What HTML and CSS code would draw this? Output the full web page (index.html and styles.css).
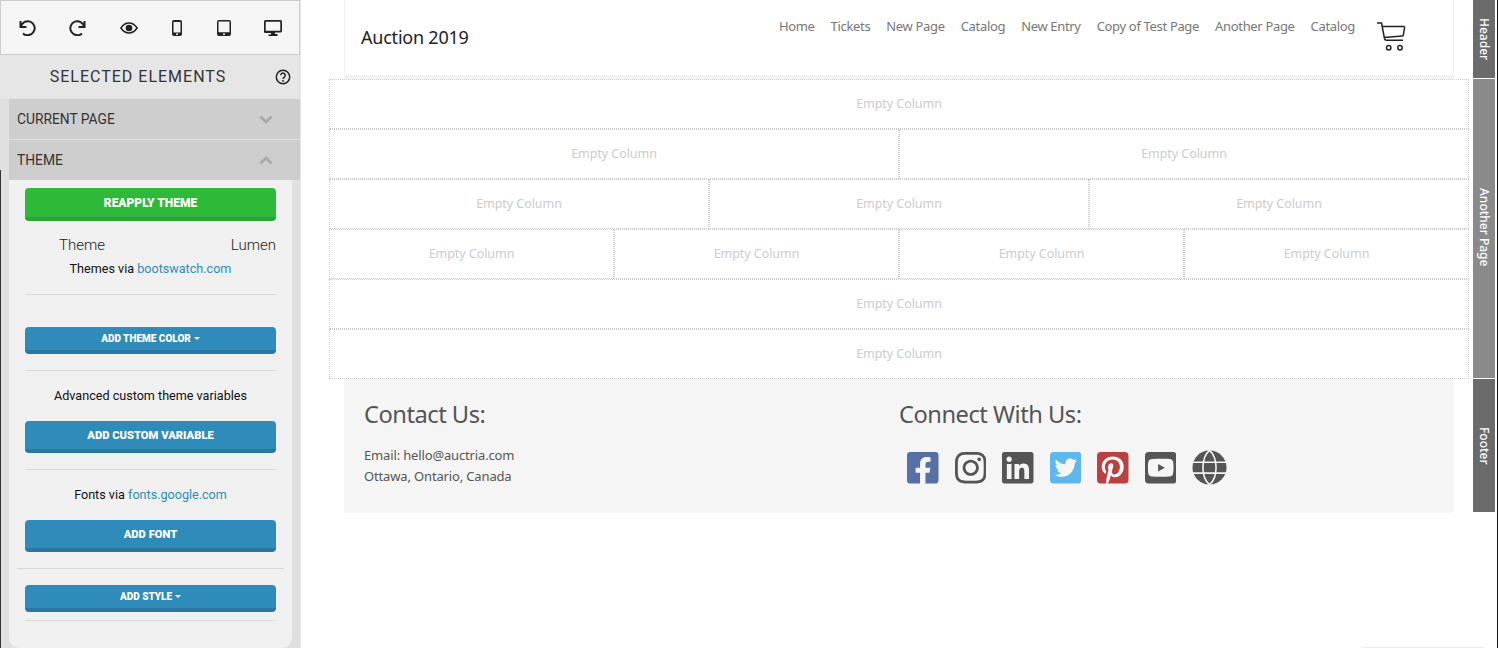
FILE: index.html
```html
<!DOCTYPE html>
<html lang="en">
<head>
<meta charset="utf-8">
<title>Auction 2019</title>
<link rel="stylesheet" href="styles.css">
</head>
<body>
<aside class="sidebar">
  <div class="toolbar">
    <svg class="tool t-undo" viewBox="0 0 17 16"><path class="ln" d="M1.500 1v6h6M1.800 6.800A7 7 0 1 1 4 13.400"/></svg>
    <svg class="tool t-redo" viewBox="0 0 17 16"><path class="ln" d="M15.500 1v6h-6M15.200 6.800A7 7 0 1 0 13 13.400"/></svg>
    <svg class="tool t-eye" viewBox="0 0 18 12"><path class="ln thin" d="M.9 6C3 2.800 5.800 1 9 1s6 1.800 8.100 5C15 9.200 12.200 11 9 11S3 9.200.9 6z"/><circle cx="9" cy="6" r="3.300"/></svg>
    <svg class="tool t-phone" viewBox="0 0 10 16"><path fill-rule="evenodd" d="M2 0h6a2 2 0 0 1 2 2v12a2 2 0 0 1-2 2H2a2 2 0 0 1-2-2V2a2 2 0 0 1 2-2zm-.5 2v10.500h7V2zM5 13.200a1 1 0 1 0 0 2 1 1 0 0 0 0-2z"/></svg>
    <svg class="tool t-tablet" viewBox="0 0 14 16"><path fill-rule="evenodd" d="M2 0h10a2 2 0 0 1 2 2v12a2 2 0 0 1-2 2H2a2 2 0 0 1-2-2V2a2 2 0 0 1 2-2zm-.5 1.500v10.800h11V1.500zM7 13.200a1 1 0 1 0 0 2 1 1 0 0 0 0-2z"/></svg>
    <svg class="tool t-desk" viewBox="0 0 18 16"><path fill-rule="evenodd" d="M1.500 0h15A1.500 1.500 0 0 1 18 1.500v9.500a1.500 1.500 0 0 1-1.500 1.500h-5.500v1.500h2.500V16h-9v-1.500H7v-1.500H1.500A1.500 1.500 0 0 1 0 11V1.500A1.500 1.500 0 0 1 1.500 0zm.2 1.700v9.100h14.600V1.700z"/></svg>
  </div>
  <div class="title">
    <span class="title-text">SELECTED ELEMENTS</span>
    <svg class="help" viewBox="0 0 16 16"><circle cx="8" cy="8" r="6.700"/><path d="M5.800 6.300a2.200 2.200 0 1 1 3.500 1.800c-.8.600-1.300 1-1.300 2"/><circle class="dot" cx="8" cy="12" r=".9"/></svg>
  </div>
  <div class="accordion">
    <div class="acc-head"><span>CURRENT PAGE</span><svg class="chev" viewBox="0 0 14 9"><path d="M1.500 1.500 7 7l5.500-5.500"/></svg></div>
    <div class="acc-head acc-second"><span>THEME</span><svg class="chev" viewBox="0 0 14 9"><path d="M1.500 7.500 7 2l5.500 5.500"/></svg></div>
    <div class="panel">
      <a class="btn btn-green">REAPPLY THEME</a>
      <div class="theme-row"><span class="theme-label">Theme</span><span>Lumen</span></div>
      <p class="note note-themes">Themes via <a class="link">bootswatch.com</a></p>
      <hr class="rule rule-a">
      <a class="btn btn-small btn-color">ADD THEME COLOR<i class="caret"></i></a>
      <hr class="rule rule-b">
      <p class="note note-adv">Advanced custom theme variables</p>
      <a class="btn btn-var">ADD CUSTOM VARIABLE</a>
      <hr class="rule rule-c">
      <p class="note note-fonts">Fonts via <a class="link">fonts.google.com</a></p>
      <a class="btn btn-font">ADD FONT</a>
      <hr class="rule rule-wide">
      <a class="btn btn-small btn-style">ADD STYLE<i class="caret"></i></a>
      <hr class="rule rule-d">
    </div>
  </div>
</aside>
<main class="main">
  <div class="content">
    <header class="site-header">
      <div class="brand">Auction 2019</div>
      <nav class="nav">
        <a>Home</a><a>Tickets</a><a>New Page</a><a>Catalog</a><a>New Entry</a><a>Copy of Test Page</a><a>Another Page</a><a>Catalog</a>
      </nav>
      <svg class="cart" viewBox="0 0 30 30"><path d="M1 2h4.500l3 15.500c.2 1 .8 1.700 2 1.700h16.500M6 5.500h21.500c.8 0 1.200.4 1.100 1.200l-1.300 7.500c-.1.600-.5.900-1.100.9L8 16.500"/><circle cx="12.700" cy="26.700" r="2.200"/><circle cx="24" cy="26.700" r="2.200"/></svg>
    </header>
    <section class="rows">
      <div class="row"><div class="col">Empty Column</div></div>
      <div class="row"><div class="col">Empty Column</div><div class="col">Empty Column</div></div>
      <div class="row"><div class="col">Empty Column</div><div class="col">Empty Column</div><div class="col">Empty Column</div></div>
      <div class="row"><div class="col">Empty Column</div><div class="col">Empty Column</div><div class="col">Empty Column</div><div class="col">Empty Column</div></div>
      <div class="row"><div class="col">Empty Column</div></div>
      <div class="row"><div class="col">Empty Column</div></div>
    </section>
    <footer class="site-footer">
      <div class="foot-col">
        <h2>Contact Us:</h2>
        <p>Email: hello@auctria.com<br>Ottawa, Ontario, Canada</p>
      </div>
      <div class="foot-col">
        <h2>Connect With Us:</h2>
        <div class="social">
          <svg class="si fb" viewBox="0 32 448 448"><path d="M400 32H48A48 48 0 0 0 0 80v352a48 48 0 0 0 48 48h137.250V327.690h-63V256h63v-54.640c0-62.150 37-96.480 93.670-96.480 27.140 0 55.520 4.840 55.520 4.840v61h-31.270c-30.810 0-40.420 19.120-40.420 38.730V256h68.780l-11 71.690h-57.780V480H400a48 48 0 0 0 48-48V80a48 48 0 0 0-48-48z"/></svg>
          <svg class="si" viewBox="0 32 448 448"><path d="M224.100 141c-63.600 0-114.900 51.300-114.900 114.900s51.300 114.900 114.900 114.900S339 319.500 339 255.900 287.700 141 224.100 141zm0 189.600c-41.100 0-74.700-33.500-74.700-74.700s33.500-74.700 74.700-74.700 74.700 33.500 74.700 74.700-33.600 74.700-74.700 74.700zm146.400-194.300c0 14.900-12 26.800-26.800 26.800-14.900 0-26.800-12-26.800-26.800s12-26.800 26.800-26.800 26.800 12 26.800 26.800zm76.100 27.200c-1.700-35.900-9.900-67.700-36.200-93.900-26.200-26.200-58-34.400-93.900-36.200-37-2.100-147.900-2.100-184.900 0-35.800 1.700-67.600 9.900-93.900 36.100s-34.400 58-36.200 93.900c-2.100 37-2.100 147.900 0 184.900 1.700 35.900 9.900 67.700 36.200 93.900s58 34.400 93.900 36.200c37 2.100 147.900 2.100 184.900 0 35.900-1.700 67.700-9.900 93.900-36.200 26.200-26.200 34.400-58 36.200-93.900 2.100-37 2.100-147.800 0-184.800zM398.800 388c-7.800 19.600-22.900 34.700-42.600 42.600-29.500 11.700-99.500 9-132.100 9s-102.700 2.600-132.100-9c-19.600-7.800-34.700-22.900-42.600-42.600-11.700-29.500-9-99.500-9-132.100s-2.600-102.700 9-132.100c7.800-19.600 22.900-34.700 42.600-42.600 29.500-11.700 99.500-9 132.100-9s102.700-2.600 132.100 9c19.600 7.800 34.700 22.900 42.600 42.600 11.700 29.500 9 99.500 9 132.100s2.700 102.700-9 132.100z"/></svg>
          <svg class="si" viewBox="0 32 448 448"><path d="M416 32H31.900C14.300 32 0 46.500 0 64.300v383.400C0 465.500 14.300 480 31.900 480H416c17.600 0 32-14.500 32-32.300V64.300c0-17.800-14.400-32.300-32-32.300zM135.400 416H69V202.200h66.500V416zm-33.200-243c-21.300 0-38.500-17.300-38.500-38.500S80.900 96 102.200 96c21.200 0 38.500 17.300 38.500 38.500 0 21.300-17.200 38.500-38.500 38.500zm282.100 243h-66.400V312c0-24.800-.5-56.700-34.500-56.700-34.600 0-39.900 27-39.900 54.900V416h-66.400V202.200h63.700v29.200h.9c8.900-16.800 30.600-34.500 62.900-34.500 67.200 0 79.700 44.300 79.700 101.900V416z"/></svg>
          <svg class="si tw" viewBox="0 32 448 448"><path d="M400 32H48C21.500 32 0 53.500 0 80v352c0 26.500 21.500 48 48 48h352c26.500 0 48-21.500 48-48V80c0-26.500-21.500-48-48-48zm-48.900 158.800c.2 2.800.2 5.700.2 8.500 0 86.700-66 186.600-186.600 186.600-37.200 0-71.700-10.800-100.700-29.400 5.300.6 10.400.8 15.800.8 30.700 0 58.900-10.400 81.400-28-28.800-.6-53-19.500-61.300-45.500 10.100 1.500 19.200 1.500 29.600-1.200-30-6.100-52.500-32.500-52.500-64.400v-.8c8.700 4.900 18.900 7.900 29.600 8.300a65.447 65.447 0 0 1-29.200-54.600c0-12.200 3.200-23.400 8.900-33.100 32.300 39.800 80.800 65.800 135.200 68.600-9.300-44.500 24-80.600 64-80.600 18.900 0 35.900 7.900 47.900 20.700 14.800-2.800 29-8.300 41.600-15.800-4.900 15.200-15.100 28-28.600 36 13.200-1.400 26-5.100 37.800-10.200-8.900 13.100-20.100 24.700-32.900 34z"/></svg>
          <svg class="si pi" viewBox="0 32 448 448"><path d="M448 80v352c0 26.500-21.500 48-48 48H154.400c9.800-16.400 22.400-40 27.400-59.300 3-11.500 15.300-58.400 15.300-58.400 8 15.300 31.400 28.200 56.300 28.200 74.100 0 127.400-68.100 127.400-152.700 0-81.100-66.200-141.800-151.400-141.800-106 0-162.200 71.100-162.200 148.600 0 36 19.200 80.800 49.800 95.100 4.700 2.200 7.100 1.200 8.200-3.300.8-3.400 5-20.100 6.800-27.800.6-2.500.3-4.600-1.700-7-10.100-12.300-18.300-34.900-18.300-56 0-54.200 41-106.600 110.900-106.600 60.300 0 102.600 41.100 102.600 99.900 0 66.400-33.500 112.400-77.200 112.400-24.100 0-42.100-19.900-36.400-44.400 6.900-29.200 20.300-60.700 20.300-81.800 0-53-75.500-45.700-75.500 25 0 21.700 7.300 36.500 7.300 36.500-31.400 132.800-36.100 134.500-29.600 192.600l2.200.8H48c-26.500 0-48-21.500-48-48V80c0-26.500 21.500-48 48-48h352c26.500 0 48 21.500 48 48z"/></svg>
          <svg class="si" viewBox="0 32 448 448"><path d="M186.800 202.100l95.200 54.100-95.200 54.100V202.100zM448 80v352c0 26.500-21.500 48-48 48H48c-26.500 0-48-21.500-48-48V80c0-26.500 21.500-48 48-48h352c26.500 0 48 21.500 48 48zm-42 176.300s0-59.600-7.600-88.200c-4.200-15.800-16.500-28.200-32.200-32.400C337.900 128 224 128 224 128s-113.900 0-142.200 7.700c-15.700 4.200-28 16.600-32.200 32.400-7.600 28.500-7.600 88.200-7.600 88.200s0 59.600 7.600 88.200c4.200 15.800 16.500 27.700 32.200 31.900C110.100 384 224 384 224 384s113.900 0 142.200-7.700c15.700-4.200 28-16.100 32.200-31.900 7.600-28.500 7.600-88.100 7.600-88.100z"/></svg>
          <svg class="si globe" viewBox="0 0 36 36"><circle cx="18" cy="18" r="17.500"/><path class="cut" d="M0 12.500h36M0 23.800h36M18 .3C9 8 9 28 18 35.700M18 .3C27 8 27 28 18 35.700"/></svg>
        </div>
      </div>
    </footer>
  </div>
  <div class="tabs">
    <div class="tab tab-header">Header</div>
    <div class="tab tab-page">Another Page</div>
    <div class="tab tab-footer">Footer</div>
  </div>
</main>
<div class="edge"></div>
<div class="peek"></div>
</body>
</html>
```
FILE: styles.css
```css
* { box-sizing: border-box; }
html, body { margin: 0; padding: 0; height: 100%; }
body { position: relative; display: flex; width: 1498px; height: 648px; overflow: hidden; background: #fff; border-right: 1px solid #111; font-family: "Roboto", sans-serif; }
.edge { position: absolute; left: 0; top: 170px; bottom: 0; width: 1px; background: #333; }
.peek { position: absolute; left: 1362px; top: 647px; width: 122px; height: 1px; background: #ececec; }

.sidebar { width: 301px; flex: none; height: 648px; background: #e0e0e0; border-right: 1px solid #e6e6e6; display: flex; flex-direction: column; }
.toolbar { height: 55px; flex: none; background: #f5f5f5; border: 1px solid #ccc; display: flex; align-items: center; padding: 0 0 0 18px; }
.tool { flex: none; fill: #222; }
.t-undo, .t-redo { width: 17px; height: 16px; }
.t-redo { margin-left: 33px; }
.t-eye { width: 18px; height: 12px; margin-left: 34px; }
.t-phone { width: 10px; height: 16px; margin-left: 34px; }
.t-tablet { width: 14px; height: 16px; margin-left: 35px; }
.t-desk { width: 18px; height: 16px; margin-left: 33px; }
.ln { fill: none; stroke: #222; stroke-width: 2; }
.thin { stroke-width: 1.500; }
.title { height: 44px; flex: none; background: #e6e6e6; display: flex; align-items: center; position: relative; justify-content: center; padding: 0 24px 2px 0; }
.title-text { font-size: 16px; letter-spacing: 1px; color: #333; }
.help { position: absolute; left: 275px; top: 14px; width: 16px; height: 16px; fill: none; stroke: #222; stroke-width: 1.500; }
.help .dot { fill: #222; stroke: none; }
.accordion { margin-left: 9px; flex: none; }
.acc-head { background: #cecece; height: 40px; display: flex; align-items: center; justify-content: space-between; padding: 0 27px 0 8px; font-size: 13.800px; color: #333; }
.acc-second { margin-top: 1px; background: #cdcdcd; }
.chev { width: 14px; height: 9px; fill: none; stroke: #a8a8a8; stroke-width: 2.800; }
.panel { width: 283px; height: 468px; background: #f0f0f0; border-radius: 0 0 10px 10px; padding: 8px 16px 0; display: flex; flex-direction: column; align-items: stretch; font-size: 12.600px; color: #111; }
.btn { display: block; flex: none; text-align: center; color: #fff; background: #2e8bba; border-bottom: 4px solid #2a78a2; border-radius: 4px; font-weight: 900; font-size: 11.200px; height: 32px; line-height: 30px; }
.btn-green { background: #2eb938; border-bottom-color: #2aa334; height: 33px; font-size: 12px; line-height: 31px; }
.btn-small { height: 27px; line-height: 24px; font-size: 10px; }
.caret { display: inline-block; margin-left: 3px; vertical-align: 2px; border-top: 3px solid #fff; border-left: 3px solid transparent; border-right: 3px solid transparent; }
.theme-row { display: flex; justify-content: space-between; padding-left: 34px; margin-top: 15px; font-size: 15px; font-weight: 300; height: 18px; line-height: 18px; color: #222; }
.note { margin: 0; text-align: center; line-height: 16px; height: 16px; }
.note-themes { margin-top: 7px; }
.link { color: #2e8bba; }
.rule { border: 0; border-top: 1px solid #d8d8d8; margin: 0; height: 1px; flex: none; }
.rule-a { margin-top: 17px; }
.btn-color { margin-top: 32px; }
.rule-b { margin-top: 16px; }
.note-adv { margin-top: 17px; }
.btn-var { margin-top: 17px; }
.rule-c { margin-top: 16px; }
.note-fonts { margin-top: 17px; }
.btn-font { margin-top: 17px; }
.rule-wide { margin: 16px -8px 0; }
.btn-style { margin-top: 16px; }
.rule-d { margin-top: 8px; }

.main { flex: 1; display: flex; padding-left: 28px; align-items: flex-start; }
.content { width: 1140px; flex: none; }
.site-header { margin: 0 15px; height: 79px; border-left: 1px solid #f2f2f2; border-right: 1px solid #f2f2f2; border-bottom: 4px solid #f3f3f3; display: flex; align-items: flex-start; padding-left: 16px; font-family: "Noto Sans", sans-serif; }
.brand { font-size: 18px; color: #222; margin-top: 25px; line-height: 24px; letter-spacing: -.22px; flex: 1; }
.nav { display: flex; gap: 16px; margin-top: 17px; font-size: 13px; line-height: 18px; color: #777; letter-spacing: -.33px; }
.cart { width: 30px; height: 30px; margin: 21px 47px 0 21px; fill: none; stroke: #222; stroke-width: 1.500; flex: none; }
.row { display: flex; height: 50px; }
.col { flex: 1; display: flex; align-items: center; justify-content: center; padding-bottom: 2px; border: 1px dotted #cdcdcd; font-family: "Noto Sans", sans-serif; font-size: 12.500px; color: #ccc; letter-spacing: -.05px; }
.site-footer { margin: 0 15px; height: 134px; background: #f5f5f5; display: flex; padding: 20px 20px 0; font-family: "Noto Sans", sans-serif; color: #555; }
.foot-col { width: 535px; }
.foot-col h2 { margin: 0; font-size: 23.700px; font-weight: 400; line-height: 30px; letter-spacing: -.5px; color: #555; }
.foot-col p { margin: 16px 0 0; font-size: 13px; line-height: 21px; letter-spacing: -.15px; }
.social { display: flex; gap: 16px; padding-left: 8px; margin-top: 23px; }
.si { width: 31.500px; height: 31.500px; fill: #555; flex: none; }
.fb { fill: #5670a6; }
.tw { fill: #5eb8ee; }
.pi { fill: #b84141; }
.globe { width: 35px; height: 35px; margin-top: -2px; }
.cut { fill: none; stroke: #f5f5f5; stroke-width: 1.600; }

.tabs { width: 22px; flex: none; margin-left: 4px; display: flex; flex-direction: column; gap: 1px; }
.tab { color: #fff; writing-mode: vertical-rl; display: flex; align-items: center; justify-content: center; font-family: "Noto Sans", sans-serif; font-size: 12px; font-weight: 500; }
.tab-header { height: 78px; background: #6b6b6b; }
.tab-page { height: 299px; background: #8a8a8a; padding-bottom: 2px; }
.tab-footer { height: 133px; background: #6b6b6b; }
```
